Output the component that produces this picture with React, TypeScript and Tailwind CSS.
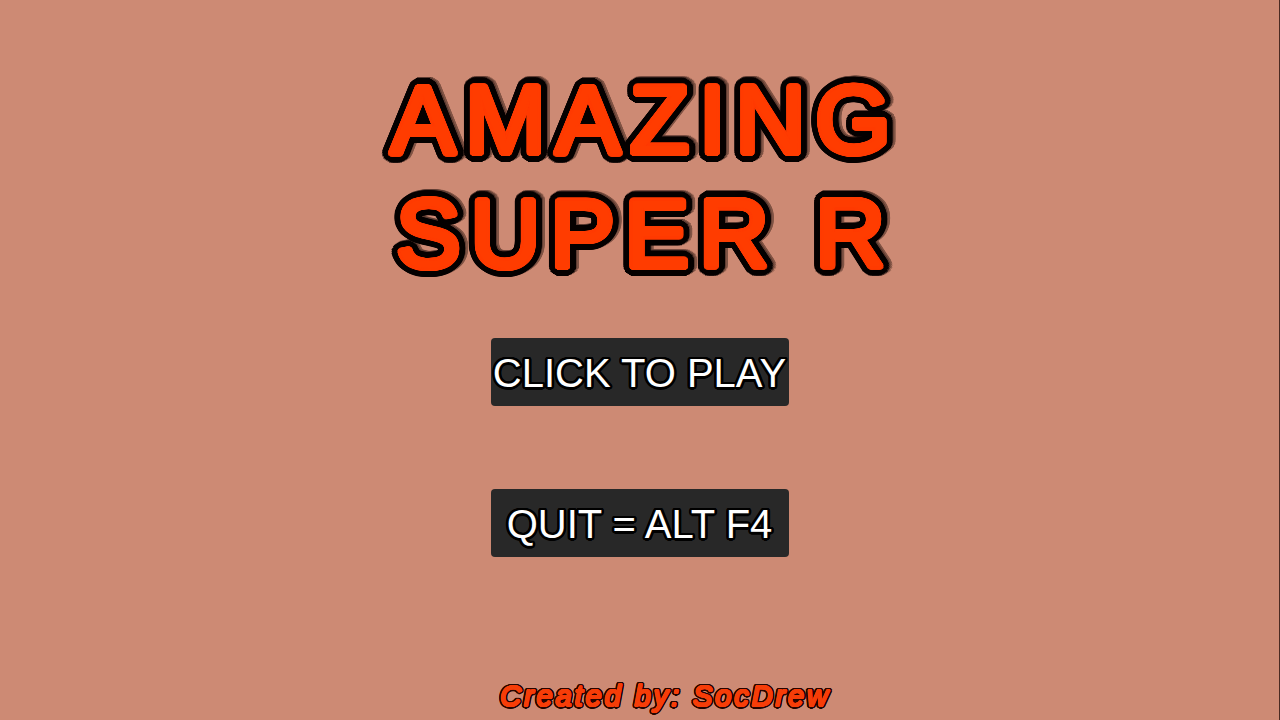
import React from "react";

/** Rings of hard shadows that thicken text evenly, with rounded corners. */
function rings(radii: number[], color: string, steps = 32, dx = 0, dy = 0): string {
  return radii
    .flatMap((radius) =>
      Array.from({ length: steps }, (_, i) => {
        const angle = (i / steps) * Math.PI * 2;
        const x = (Math.cos(angle) * radius + dx).toFixed(2);
        const y = (Math.sin(angle) * radius + dy).toFixed(2);
        return `${x}px ${y}px 0 ${color}`;
      })
    )
    .join(", ");
}

const titleShadow = [
  rings([2, 3], "#ff3c00"),
  rings([5, 7, 9], "#060100"),
  rings([9], "#5f3d33", 32, 1, -1),
  rings([9], "#805445", 32, 3, -1),
].join(", ");
const labelShadow = rings([1, 2, 2.5], "#000000", 16);
const creditShadow = [rings([0.8], "#f63d08", 16), rings([2, 2.5], "#260500", 24)].join(", ");

function MenuButton({ children }: { children: React.ReactNode }) {
  return (
    <button
      type="button"
      className="flex h-[68px] w-[298px] cursor-pointer items-center justify-center rounded bg-[#282828] pt-0.5 text-[40px] leading-none whitespace-nowrap text-white"
      style={{ textShadow: labelShadow }}
    >
      {children}
    </button>
  );
}

export default function App() {
  return (
    <main className="flex min-h-screen flex-col items-center border-r border-[#4a2a22] bg-[#cd8a74] pt-[63px] pb-2 font-['Liberation_Sans',Arial,sans-serif]">
      <h1
        className="pl-3 text-center text-[97px] leading-[114px] tracking-widest text-[#ff3c00]"
        style={{ textShadow: titleShadow }}
      >
        AMAZING
        <br />
        SUPER R
      </h1>
      <nav className="mt-[47px] flex flex-col gap-[83px]">
        <MenuButton>CLICK TO PLAY</MenuButton>
        <MenuButton>QUIT = ALT F4</MenuButton>
      </nav>
      <footer
        className="mt-auto pl-[52px] text-[29px] leading-8 tracking-widest whitespace-nowrap text-[#f63d08] italic"
        style={{ textShadow: creditShadow }}
      >
        Created by: SocDrew
      </footer>
    </main>
  );
}
